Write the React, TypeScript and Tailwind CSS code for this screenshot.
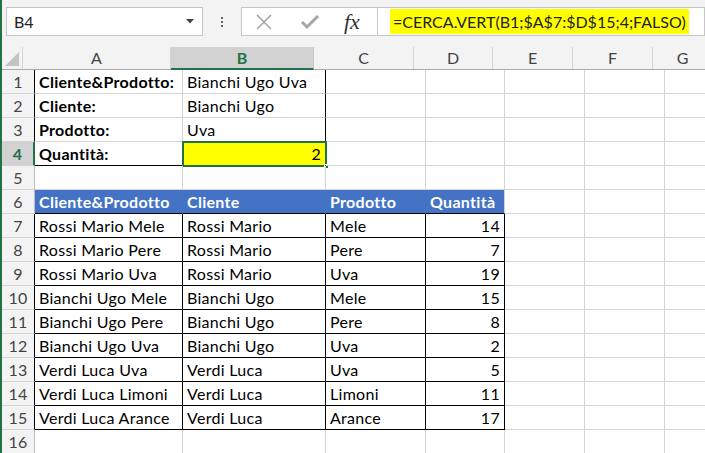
import React from 'react'

const GRID = '#d4d4d4'
const BLACK = '#000000'
const BLUE = '#4472c4'
const GREEN = '#217346'

const cols = [
  { key: 'A', w: 'w-[148px]' },
  { key: 'B', w: 'w-[143px]' },
  { key: 'C', w: 'w-[100px]' },
  { key: 'D', w: 'w-[79px]' },
  { key: 'E', w: 'w-[80px]' },
  { key: 'F', w: 'w-[80px]' },
  { key: 'G', w: 'w-[60px]' },
]

type Cell = { v: string; bold?: boolean; right?: boolean }

const table: string[][] = [
  ['Rossi Mario Mele', 'Rossi Mario', 'Mele', '14'],
  ['Rossi Mario Pere', 'Rossi Mario', 'Pere', '7'],
  ['Rossi Mario Uva', 'Rossi Mario', 'Uva', '19'],
  ['Bianchi Ugo Mele', 'Bianchi Ugo', 'Mele', '15'],
  ['Bianchi Ugo Pere', 'Bianchi Ugo', 'Pere', '8'],
  ['Bianchi Ugo Uva', 'Bianchi Ugo', 'Uva', '2'],
  ['Verdi Luca Uva', 'Verdi Luca', 'Uva', '5'],
  ['Verdi Luca Limoni', 'Verdi Luca', 'Limoni', '11'],
  ['Verdi Luca Arance', 'Verdi Luca', 'Arance', '17'],
]

function cellAt(r: number, c: number): Cell | null {
  if (r === 1) return c === 0 ? { v: 'Cliente&Prodotto:', bold: true } : c === 1 ? { v: 'Bianchi Ugo Uva' } : null
  if (r === 2) return c === 0 ? { v: 'Cliente:', bold: true } : c === 1 ? { v: 'Bianchi Ugo' } : null
  if (r === 3) return c === 0 ? { v: 'Prodotto:', bold: true } : c === 1 ? { v: 'Uva' } : null
  if (r === 4) return c === 0 ? { v: 'Quantità:', bold: true } : c === 1 ? { v: '2', right: true } : null
  if (r === 6 && c < 4) return { v: ['Cliente&Prodotto', 'Cliente', 'Prodotto', 'Quantità'][c], bold: true }
  if (r >= 7 && r <= 15 && c < 4) return { v: table[r - 7][c], right: c === 3 }
  return null
}

function rightColor(r: number, c: number) {
  if (r >= 1 && r <= 4 && c === 1) return BLACK
  if (r === 6 && c <= 2) return BLUE
  if (r >= 7 && r <= 15 && c <= 3) return BLACK
  return GRID
}

function bottomColor(r: number, c: number) {
  if (r === 4 && c <= 1) return BLACK
  if (r >= 6 && r <= 15 && c <= 3) return BLACK
  return GRID
}

function rowHeadBorder(r: number) {
  if (r === 4) return GREEN
  if ((r >= 1 && r <= 3) || (r >= 7 && r <= 15)) return BLACK
  return '#bfbfbf'
}

function FormulaBar() {
  return (
    <div className="h-[47px] bg-[#f3f3f3] flex items-start pt-[7px]">
      <div className="ml-[4px] w-[197px] h-[29px] bg-white border border-[#c6c6c6] flex items-center justify-between pl-[7px] pr-[8px] text-[16px] text-[#222]">
        <span>B4</span>
        <svg width="8" height="5" viewBox="0 0 8 5">
          <polygon points="0,0 8,0 4,4.5" fill="#444" />
        </svg>
      </div>
      <div className="w-[38px] h-[29px] flex flex-col items-center justify-center gap-[2px]">
        <span className="w-[2px] h-[2px] bg-[#666]" />
        <span className="w-[2px] h-[2px] bg-[#666]" />
        <span className="w-[2px] h-[2px] bg-[#666]" />
      </div>
      <div className="w-[137px] h-[29px] bg-white border border-[#c6c6c6] flex items-center">
        <svg width="18" height="16" viewBox="0 0 18 16" className="ml-[13px]">
          <path d="M2 1 L16 15 M16 1 L2 15" stroke="#a6a6a6" strokeWidth="1.6" fill="none" />
        </svg>
        <svg width="20" height="16" viewBox="0 0 20 16" className="ml-[27px]">
          <path d="M2 8 L7 13 L18 2" stroke="#a6a6a6" strokeWidth="3" fill="none" />
        </svg>
        <span className="ml-[24px] text-[22px] italic text-[#333] font-['Liberation_Serif',serif] leading-none">fx</span>
      </div>
      <div className="flex-1 h-[29px] bg-white border border-l-0 border-[#c6c6c6] flex items-center pl-[12px]">
        <span className="bg-[#ffff00] h-[25px] px-[3px] flex items-center text-[16px] text-[#222]">
          =CERCA.VERT(B1;$A$7:$D$15;4;FALSO)
        </span>
      </div>
    </div>
  )
}

function ColumnHeader() {
  return (
    <div className="flex h-[23px] bg-[#f3f3f3] border-b border-[#ababab] text-[16px] text-[#444]">
      <div className="w-[33px] h-full border-r border-[#d4d4d4] flex items-end justify-end p-[3px]">
        <svg width="14" height="14" viewBox="0 0 14 14">
          <polygon points="14,0 14,14 0,14" fill="#c4c4c4" />
        </svg>
      </div>
      {cols.map((c) =>
        c.key === 'B' ? (
          <div key={c.key} className={`${c.w} h-[23px] shrink-0 bg-[#d2d2d2] border-r border-[#c6c6c6] border-b-2 border-b-[#217346] flex items-center justify-center font-bold text-[#217346]`}>
            {c.key}
          </div>
        ) : (
          <div key={c.key} className={`${c.w} h-full shrink-0 border-r border-[#d4d4d4] flex items-center justify-center`}>
            {c.key}
          </div>
        )
      )}
    </div>
  )
}

function Row({ r }: { r: number }) {
  return (
    <div className="flex h-[24px] text-[16px] tracking-[0.3px]">
      <div
        className={`w-[33px] shrink-0 h-full flex items-center justify-center border-b border-[#d4d4d4] ${
          r === 4 ? 'bg-[#d2d2d2] text-[#217346] font-bold border-r-2' : 'bg-[#f3f3f3] text-[#444] border-r'
        }`}
        style={{ borderRightColor: rowHeadBorder(r) }}
      >
        {r}
      </div>
      {cols.map((c, ci) => {
        const cell = cellAt(r, ci)
        const selected = r === 4 && ci === 1
        return (
          <div
            key={c.key}
            className={`${c.w} shrink-0 h-full relative border-r border-b flex items-center px-[4px] whitespace-nowrap overflow-visible ${
              r === 6 && ci < 4 ? 'bg-[#4472c4] text-white' : 'text-black'
            } ${selected ? 'bg-[#ffff00]' : ''} ${cell?.right ? 'justify-end' : ''} ${cell?.bold ? 'font-bold' : ''}`}
            style={{ borderRightColor: rightColor(r, ci), borderBottomColor: bottomColor(r, ci) }}
          >
            {cell?.v}
            {selected && (
              <>
                <div className="absolute left-[-1px] top-[-1px] right-[-2px] bottom-[-2px] border-2 border-[#217346] pointer-events-none" />
                <div className="absolute right-[-4px] bottom-[-4px] w-[5px] h-[5px] bg-[#217346] border border-white" />
              </>
            )}
          </div>
        )
      })}
    </div>
  )
}

export default function App() {
  const rows = Array.from({ length: 16 }, (_, i) => i + 1)
  return (
    <div className="w-[705px] h-[453px] overflow-hidden bg-white flex font-['Lato','Liberation_Sans',sans-serif]">
      <div className="w-[2px] shrink-0 bg-[#217346]" />
      <div className="flex-1 min-w-0 overflow-hidden">
        <FormulaBar />
        <ColumnHeader />
        {rows.map((r) => (
          <Row key={r} r={r} />
        ))}
      </div>
    </div>
  )
}
